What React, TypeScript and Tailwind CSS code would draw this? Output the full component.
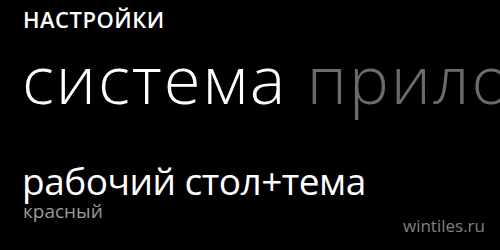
export default function App() {
  return (
    <div
      className="w-[500px] h-[250px] bg-black overflow-hidden relative"
      style={{ fontFamily: '"Open Sans", "Noto Sans", sans-serif' }}
    >
      <div className="pl-[23px] pt-[5px] text-white text-[22px] leading-[28px] font-semibold tracking-[0.5px]">
        НАСТРОЙКИ
      </div>
      <div className="pl-[22px] mt-[5px] whitespace-nowrap text-[67px] leading-[80px] font-light text-white tracking-[2px]">
        система <span className="text-[#6b6b6b]">приложения</span>
      </div>
      <div className="pl-[22px] mt-[43px] whitespace-nowrap text-[37px] leading-[40px] text-white tracking-[-0.5px]">
        рабочий стол+тема
      </div>
      <div className="pl-[23px] text-[19px] leading-[20px] text-[#9a9a9a]">красный</div>
      <div className="absolute right-[15px] bottom-[14px] text-[17px] leading-[20px] text-[#808080]">
        wintiles.ru
      </div>
    </div>
  );
}
